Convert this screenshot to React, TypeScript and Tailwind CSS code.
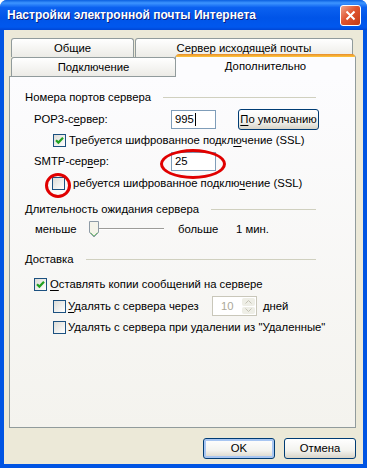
import React from "react";

const ui = "font-['Liberation_Sans',Arial,sans-serif] text-[11.3px] text-black";

function Check({ checked }: { checked?: boolean }) {
  return (
    <span className="inline-flex h-[13px] w-[13px] shrink-0 items-center justify-center border border-[#1c5180] bg-[linear-gradient(135deg,#dcdcd7,#ffffff)]">
      {checked && (
        <svg width="9" height="9" viewBox="0 0 9 9">
          <path d="M1 4.2 L3.4 6.6 L8 1.8" stroke="#21a121" strokeWidth="2.2" fill="none" />
        </svg>
      )}
    </span>
  );
}

function Group({ children }: { children: React.ReactNode }) {
  return (
    <div className="flex h-[20px] w-[306px] items-center pl-[15px]">
      <span className="whitespace-nowrap">{children}</span>
      <span className="ml-[12px] h-px flex-1 bg-[#d0d0bf]" />
    </div>
  );
}

function U({ children }: { children: React.ReactNode }) {
  return <span className="underline underline-offset-[2px]">{children}</span>;
}

function Field({ value, caret }: { value: string; caret?: boolean }) {
  return (
    <div className="flex h-[19px] w-[45px] items-center border border-[#7f9db9] bg-white pl-[3px]">
      <span>{value}</span>
      {caret && <span className="ml-px h-[13px] w-px bg-black" />}
    </div>
  );
}

function XPButton({ children, primary, w }: { children: React.ReactNode; primary?: boolean; w: string }) {
  return (
    <div
      className={`flex h-[21px] items-center justify-center rounded-[3px] border border-[#003c74] bg-[linear-gradient(to_bottom,#ffffff,#f3f3ef_60%,#d8d4c8)] ${w} ${
        primary ? "shadow-[inset_0_0_0_2px_#a8c6f2]" : ""
      }`}
    >
      <span className="whitespace-nowrap">{children}</span>
    </div>
  );
}

function Tab({ label, w, selected }: { label: string; w: string; selected?: boolean }) {
  if (selected) {
    return (
      <div
        className={`relative z-10 -mt-[2px] flex h-[22px] items-start justify-center rounded-t-[3px] border-x border-[#919b9c] bg-[#fcfcfe] pt-[3px] ${w}`}
      >
        <span className="absolute left-0 right-0 -top-px h-[3px] rounded-t-[3px] bg-[linear-gradient(to_bottom,#e68b2c,#ffc73c)]" />
        {label}
      </div>
    );
  }
  return (
    <div
      className={`flex h-[19px] items-center justify-center rounded-t-[3px] border border-b-0 border-[#919b9c] bg-[linear-gradient(to_bottom,#ffffff,#ecebe6)] ${w}`}
    >
      {label}
    </div>
  );
}

export default function App() {
  return (
    <div className={`flex h-[468px] w-[367px] flex-col rounded-t-[7px] bg-[#0054e3] ${ui}`}>
      <div className="flex h-[30px] shrink-0 items-center justify-between rounded-t-[7px] bg-[linear-gradient(to_bottom,#0a5fe0_0%,#3d95ff_10%,#0b61f0_25%,#0054e8_60%,#0058ee_90%,#0046d5_100%)] pl-[7px] pr-[6px]">
        <span className="text-[12px] font-bold text-white [text-shadow:1px_1px_#0a1e80]">
          Настройки электронной почты Интернета
        </span>
        <div className="flex h-[21px] w-[21px] items-center justify-center rounded-[3px] border border-white bg-[linear-gradient(135deg,#f0a58c,#e0542f_45%,#c43a14)]">
          <svg width="11" height="11" viewBox="0 0 11 11">
            <path d="M1.5 1.5 L9.5 9.5 M9.5 1.5 L1.5 9.5" stroke="#fff" strokeWidth="2" />
          </svg>
        </div>
      </div>

      <div className="mx-[4px] mb-[4px] flex flex-1 flex-col bg-[#ece9d8] pt-[8px]">
        <div className="ml-[7px] flex gap-px">
          <Tab label="Общие" w="w-[123px]" />
          <Tab label="Сервер исходящей почты" w="w-[218px]" />
        </div>
        <div className="ml-[7px] flex">
          <Tab label="Подключение" w="w-[165px]" />
          <Tab label="Дополнительно" w="w-[181px] -ml-px" selected />
        </div>

        <div className="relative -mt-px ml-[5px] h-[352px] w-[347px] border border-[#919b9c] bg-[linear-gradient(to_bottom,#fcfcfe,#f4f3ee)] pt-[10px]">
          <Group>Номера портов сервера</Group>

          <div className="mt-[2px] flex h-[20px] items-center pl-[24px]">
            <span className="w-[137px]">
              POP3-с<U>е</U>рвер:
            </span>
            <Field value="995" caret />
            <div className="ml-[22px]">
              <XPButton w="w-[81px]">
                <U>П</U>о умолчанию
              </XPButton>
            </div>
          </div>

          <div className="mt-px flex h-[20px] items-center pl-[43px]">
            <Check checked />
            <span className="ml-[3px]">
              Требуется шифрованное подкл<U>ю</U>чение (SSL)
            </span>
          </div>

          <div className="mt-px flex h-[20px] items-center pl-[24px]">
            <span className="w-[137px]">
              SMTP-сер<U>в</U>ер:
            </span>
            <Field value="25" />
          </div>

          <div className="mt-[2px] flex h-[20px] items-center pl-[42px]">
            <Check />
            <span className="ml-[8px]">
              ребуется шифрованное подклю<U>ч</U>ение (SSL)
            </span>
          </div>

          <div className="mt-[6px]">
            <Group>
              <U>Д</U>лительность ожидания сервера
            </Group>
          </div>

          <div className="flex h-[20px] items-center pl-[25px]">
            <span className="w-[53px]">меньше</span>
            <svg width="78" height="20" viewBox="0 0 78 20">
              <rect x="2" y="9" width="74" height="1" fill="#9d9c99" />
              <rect x="2" y="10" width="74" height="1" fill="#ffffff" />
              <rect x="2" y="9" width="1" height="2" fill="#9d9c99" />
              <path d="M1.5 2.5 H10.5 V13.5 L6 18 L1.5 13.5 Z" fill="#f5f4ea" stroke="#8e9ba6" />
              <path d="M2.5 13.5 L6 17 L9.5 13.5" fill="none" stroke="#7ac27a" />
            </svg>
            <span className="ml-[12px] w-[58px]">больше</span>
            <span>1 мин.</span>
          </div>

          <div className="mt-[10px]">
            <Group>Доставка</Group>
          </div>

          <div className="mt-[5px] flex h-[20px] items-center pl-[24px]">
            <Check checked />
            <span className="ml-[3px]">
              <U>О</U>ставлять копии сообщений на сервере
            </span>
          </div>

          <div className="mt-[2px] flex h-[20px] items-center pl-[43px]">
            <Check />
            <span className="ml-[2px] w-[144px]">
              <U>У</U>далять с сервера через
            </span>
            <div className="flex h-[20px] w-[45px] items-center justify-between border border-[#c9c7ba] bg-white pl-[8px] text-[#aca899]">
              <span>10</span>
              <div className="flex h-full w-[15px] flex-col gap-px p-px">
                <div className="flex flex-1 items-center justify-center rounded-[2px] bg-[#eeeee6]">
                  <svg width="7" height="4" viewBox="0 0 7 4">
                    <path d="M0.5 3.5 L3.5 0.5 L6.5 3.5" stroke="#c4c2b4" fill="none" />
                  </svg>
                </div>
                <div className="flex flex-1 items-center justify-center rounded-[2px] bg-[#eeeee6]">
                  <svg width="7" height="4" viewBox="0 0 7 4">
                    <path d="M0.5 0.5 L3.5 3.5 L6.5 0.5" stroke="#c4c2b4" fill="none" />
                  </svg>
                </div>
              </div>
            </div>
            <span className="ml-[6px]">дней</span>
          </div>

          <div className="mt-px flex h-[20px] items-center pl-[43px]">
            <Check />
            <span className="ml-[2px]">
              У<U>д</U>алять с сервера при удалении из "Удаленные"
            </span>
          </div>

          <span className="absolute left-[150px] top-[72px] h-[30px] w-[66px] rounded-[50%] border-[3px] border-[#e00000]" />
          <span className="absolute left-[35px] top-[96px] h-[25px] w-[26px] rounded-[50%] border-[3px] border-[#e00000]" />
        </div>

        <div className="mt-[10px] flex justify-end gap-[9px] pr-[7px]">
          <XPButton primary w="w-[72px]">
            OK
          </XPButton>
          <XPButton w="w-[72px]">Отмена</XPButton>
        </div>
      </div>
    </div>
  );
}
